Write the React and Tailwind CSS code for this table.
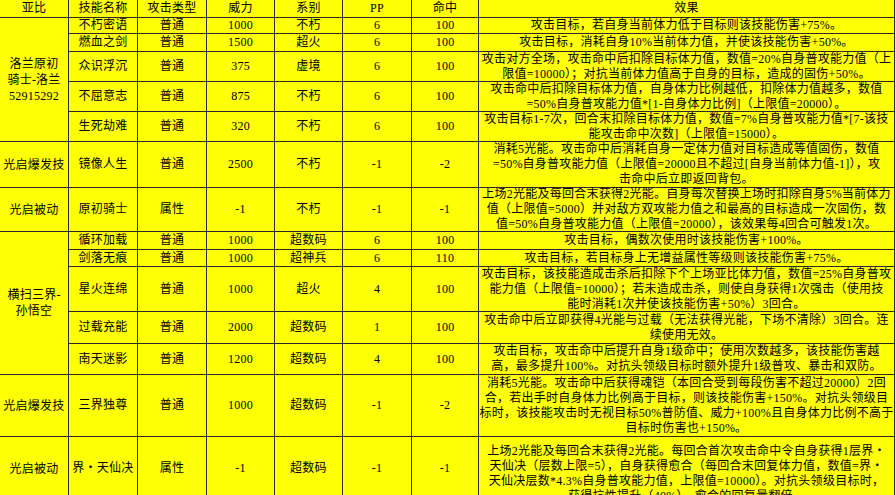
import React from "react";

const cell =
  "border-r border-b border-[#2b2b2b] flex items-center justify-center text-center overflow-visible";

const headers = ["亚比", "技能名称", "攻击类型", "威力", "系别", "PP", "命中", "效果"];

const rows = [
  { g: { span: 5, lines: ["洛兰原初", "骑士-洛兰", "52915292"] }, c: ["不朽密语", "普通", "1000", "不朽", "6", "100"], e: ["攻击目标，若自身当前体力低于目标则该技能伤害+75%。"] },
  { c: ["燃血之剑", "普通", "1500", "超火", "6", "100"], e: ["攻击目标，消耗自身10%当前体力值，并使该技能伤害+50%。"] },
  { c: ["众识浮沉", "普通", "375", "虚境", "6", "100"], e: ["攻击对方全场，攻击命中后扣除目标体力值，数值=20%自身普攻能力值（上", "限值=10000）；对抗当前体力值高于自身的目标，造成的固伤+50%。"] },
  { c: ["不屈意志", "普通", "875", "不朽", "6", "100"], e: ["攻击命中后扣除目标体力值，自身体力比例越低，扣除体力值越多，数值", "=50%自身普攻能力值*[1-自身体力比例]（上限值=20000）。"] },
  { c: ["生死劫难", "普通", "320", "不朽", "6", "100"], e: ["攻击目标1-7次，回合末扣除目标体力值，数值=7%自身普攻能力值*[7-该技", "能攻击命中次数]（上限值=15000）。"] },
  { g: { span: 1, lines: ["光启爆发技"] }, c: ["镜像人生", "普通", "2500", "不朽", "-1", "-2"], e: ["消耗5光能。攻击命中后消耗自身一定体力值对目标造成等值固伤，数值", "=50%自身普攻能力值（上限值=20000且不超过[自身当前体力值-1]），攻", "击命中后立即返回背包。"] },
  { g: { span: 1, lines: ["光启被动"] }, c: ["原初骑士", "属性", "-1", "不朽", "-1", "-1"], e: ["上场2光能及每回合末获得2光能。自身每次替换上场时扣除自身5%当前体力", "值（上限值=5000）并对敌方双攻能力值之和最高的目标造成一次固伤，数", "值=50%自身普攻能力值（上限值=20000），该效果每4回合可触发1次。"] },
  { g: { span: 5, lines: ["横扫三界-", "孙悟空"] }, c: ["循环加载", "普通", "1000", "超数码", "6", "100"], e: ["攻击目标，偶数次使用时该技能伤害+100%。"] },
  { c: ["剑落无痕", "普通", "1000", "超神兵", "6", "110"], e: ["攻击目标，若目标身上无增益属性等级则该技能伤害+75%。"] },
  { c: ["星火连绵", "普通", "1000", "超火", "4", "100"], e: ["攻击目标，该技能造成击杀后扣除下个上场亚比体力值，数值=25%自身普攻", "能力值（上限值=10000）；若未造成击杀，则使自身获得1次强击（使用技", "能时消耗1次并使该技能伤害+50%）3回合。"] },
  { c: ["过载充能", "普通", "2000", "超数码", "1", "100"], e: ["攻击命中后立即获得4光能与过载（无法获得光能，下场不清除）3回合。连", "续使用无效。"] },
  { c: ["南天迷影", "普通", "1200", "超数码", "4", "100"], e: ["攻击目标，攻击命中后提升自身1级命中；使用次数越多，该技能伤害越", "高，最多提升100%。对抗头领级目标时额外提升1级普攻、暴击和双防。"] },
  { g: { span: 1, lines: ["光启爆发技"] }, c: ["三界独尊", "普通", "1000", "超数码", "-1", "-2"], e: ["消耗5光能。攻击命中后获得魂铠（本回合受到每段伤害不超过20000）2回", "合，若出手时自身体力比例高于目标，则该技能伤害+150%。对抗头领级目", "标时，该技能攻击时无视目标50%普防值、威力+100%且自身体力比例不高于", "目标时伤害也+150%。"] },
  { g: { span: 1, lines: ["光启被动"] }, c: ["界・天仙决", "属性", "-1", "超数码", "-1", "-1"], e: ["上场2光能及每回合末获得2光能。每回合首次攻击命中令自身获得1层界・", "天仙决（层数上限=5），自身获得愈合（每回合末回复体力值，数值=界・", "天仙决层数*4.3%自身普攻能力值，上限值=10000）。对抗头领级目标时，", "获得抗性提升（40%），愈合的回复量翻倍。"], top: true },
];

export default function App() {
  return (
    <div className="w-[896px] h-[495px] overflow-hidden bg-white">
      <div className="grid grid-cols-[69px_69px_69px_68px_68px_69px_67px_416px] grid-rows-[18px_16px_18px_30px_30px_30px_46px_44px_18px_17px_45px_32px_31px_62px_64px] bg-[#ffff06] text-black text-[12px] leading-[15px] tracking-[0.25px] font-['Liberation_Serif','Noto_Sans_CJK_SC',serif]">
        {headers.map((h) => (
          <div key={h} className={cell}>
            {h}
          </div>
        ))}
        {rows.map((r, i) => (
          <React.Fragment key={i}>
            {r.g && (
              <div
                className={
                  cell +
                  " flex-col leading-[16px] " +
                  (r.g.span === 5 ? "row-span-5" : "")
                }
              >
                {r.g.lines.map((l) => (
                  <div key={l} className="whitespace-nowrap">
                    {l}
                  </div>
                ))}
              </div>
            )}
            {r.c.map((v, j) => (
              <div key={j} className={cell + " whitespace-nowrap"}>
                {v}
              </div>
            ))}
            <div
              className={
                "border-r border-b border-[#2b2b2b] flex flex-col items-center text-center " +
                (r.top ? "justify-start pt-[7px]" : "justify-center")
              }
            >
              {r.e.map((l, k) => (
                <div key={k} className="whitespace-nowrap">
                  {l}
                </div>
              ))}
            </div>
          </React.Fragment>
        ))}
      </div>
    </div>
  );
}
